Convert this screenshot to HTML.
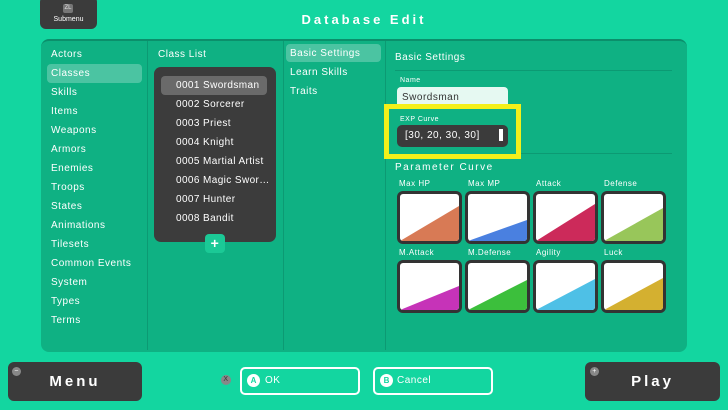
<!DOCTYPE html>
<html><head><meta charset="utf-8"><style>
*{margin:0;padding:0;box-sizing:border-box}
body{width:728px;height:410px;background:#13d6a0;font-family:"Liberation Sans",sans-serif;color:#fff;position:relative;overflow:hidden;letter-spacing:.5px}
.a{position:absolute}
.panel{left:41px;top:39px;width:646px;height:313px;background:#0fb183;border-radius:8px;border-top:2px solid #0b8f6b}
.vd{top:41px;width:1px;height:309px;background:#0c9a73}
.t{font-size:10px}
.menu div{position:absolute;left:51px;font-size:10px}
.sel{background:rgba(255,255,255,.25);border-radius:4px}
.list{left:154px;top:67px;width:122px;height:175px;background:#3c3c3c;border-radius:7px}
.list div{position:absolute;left:22px;font-size:10px;letter-spacing:.4px}
.box{position:absolute;width:65px;height:53px;background:#333;border-radius:6px;padding:3px}
.box svg{display:block;width:59px;height:47px;border-radius:3px;background:#fff}
.lab{position:absolute;font-size:8px}
.btn{position:absolute;background:#3b3b3b;border-radius:6px;font-weight:bold;font-size:15px;text-align:center;letter-spacing:3px}
.ob{position:absolute;border:2px solid #fff;border-radius:5px;height:28px;font-size:10px}
.circ{position:absolute;width:13px;height:13px;border-radius:50%;background:#fff;color:#13d6a0;font-size:8px;font-weight:bold;text-align:center;line-height:13px;letter-spacing:0}
</style></head><body>
<div class="a" style="left:40px;top:-4px;width:57px;height:33px;background:#3b3b3b;border-radius:6px"></div>
<div class="a" style="left:63px;top:4px;width:10px;height:9px;background:#777;border-radius:2px;font-size:6px;text-align:center;line-height:9px;color:#ddd;letter-spacing:0">ZL</div>
<div class="a" style="left:40px;top:16px;width:57px;text-align:center;font-size:7px;letter-spacing:0">Submenu</div>
<div class="a" style="left:0;top:12px;width:728px;text-align:center;font-size:13px;font-weight:bold;letter-spacing:3px">Database Edit</div>

<div class="a panel"></div>
<div class="a vd" style="left:147px"></div>
<div class="a vd" style="left:283px"></div>
<div class="a vd" style="left:385px"></div>

<div class="a sel" style="left:47px;top:64px;width:95px;height:19px"></div>
<div class="menu">
<div style="top:49px">Actors</div><div style="top:68px">Classes</div><div style="top:87px">Skills</div><div style="top:106px">Items</div><div style="top:125px">Weapons</div><div style="top:144px">Armors</div><div style="top:163px">Enemies</div><div style="top:182px">Troops</div><div style="top:201px">States</div><div style="top:220px">Animations</div><div style="top:239px">Tilesets</div><div style="top:258px">Common Events</div><div style="top:277px">System</div><div style="top:296px">Types</div><div style="top:315px">Terms</div>
</div>

<div class="a t" style="left:158px;top:49px">Class List</div>
<div class="a list">
<div class="sel" style="left:7px;top:9px;width:106px;height:19px;background:#6a6a6a"></div>
<div style="top:13px">0001 Swordsman</div><div style="top:32px">0002 Sorcerer</div><div style="top:51px">0003 Priest</div><div style="top:70px">0004 Knight</div><div style="top:89px">0005 Martial Artist</div><div style="top:108px">0006 Magic Swor…</div><div style="top:127px">0007 Hunter</div><div style="top:146px">0008 Bandit</div>
</div>
<div class="a" style="left:205px;top:234px;width:20px;height:19px;background:#1bc996;border-radius:4px;text-align:center;font-weight:bold;font-size:14px;line-height:19px">+</div>

<div class="a sel" style="left:286px;top:44px;width:95px;height:18px"></div>
<div class="a t" style="left:290px;top:48px">Basic Settings</div>
<div class="a t" style="left:290px;top:67px">Learn Skills</div>
<div class="a t" style="left:290px;top:86px">Traits</div>

<div class="a t" style="left:395px;top:52px">Basic Settings</div>
<div class="a" style="left:395px;top:70px;width:277px;height:1px;background:#0c9a73"></div>
<div class="a" style="left:400px;top:77px;font-size:7px">Name</div>
<div class="a" style="left:397px;top:87px;width:111px;height:20px;background:#e6f9f2;border-radius:4px 4px 0 0;color:#333;font-size:10px;padding:5px 0 0 5px">Swordsman</div>
<div class="a" style="left:384px;top:104px;width:137px;height:55px;border:5px solid #f4f01a"></div>
<div class="a" style="left:400px;top:116px;font-size:7px">EXP Curve</div>
<div class="a" style="left:397px;top:125px;width:111px;height:22px;background:#3b3b3b;border-radius:5px;font-size:10px;padding:5px 0 0 8px">[30, 20, 30, 30]</div>
<div class="a" style="left:499px;top:129px;width:4px;height:12px;background:#fff"></div>
<div class="a" style="left:521px;top:153px;width:151px;height:1px;background:#0c9a73"></div>
<div class="a t" style="left:395px;top:162px;letter-spacing:1.5px">Parameter Curve</div>

<div class="lab" style="left:399px;top:179px">Max HP</div>
<div class="lab" style="left:468px;top:179px">Max MP</div>
<div class="lab" style="left:536px;top:179px">Attack</div>
<div class="lab" style="left:604px;top:179px">Defense</div>
<div class="box" style="left:397px;top:191px"><svg viewBox="0 0 59 47"><polygon points="0,47 59,12 59,47" fill="#d87a55"/></svg></div>
<div class="box" style="left:465px;top:191px"><svg viewBox="0 0 59 47"><polygon points="0,47 59,26 59,47" fill="#4a80e0"/></svg></div>
<div class="box" style="left:533px;top:191px"><svg viewBox="0 0 59 47"><polygon points="0,47 59,10 59,47" fill="#cc2a5a"/></svg></div>
<div class="box" style="left:601px;top:191px"><svg viewBox="0 0 59 47"><polygon points="0,47 59,14 59,47" fill="#98c65a"/></svg></div>

<div class="lab" style="left:399px;top:248px">M.Attack</div>
<div class="lab" style="left:468px;top:248px">M.Defense</div>
<div class="lab" style="left:536px;top:248px">Agility</div>
<div class="lab" style="left:604px;top:248px">Luck</div>
<div class="box" style="left:397px;top:260px"><svg viewBox="0 0 59 47"><polygon points="0,47 59,23 59,47" fill="#c633b8"/></svg></div>
<div class="box" style="left:465px;top:260px"><svg viewBox="0 0 59 47"><polygon points="0,47 59,17 59,47" fill="#3cbf3c"/></svg></div>
<div class="box" style="left:533px;top:260px"><svg viewBox="0 0 59 47"><polygon points="0,47 59,16 59,47" fill="#4ec0e6"/></svg></div>
<div class="box" style="left:601px;top:260px"><svg viewBox="0 0 59 47"><polygon points="0,47 59,15 59,47" fill="#d4b030"/></svg></div>

<div class="btn" style="left:8px;top:362px;width:134px;height:39px;line-height:39px">Menu</div>
<div class="a" style="left:12px;top:367px;width:9px;height:9px;border-radius:50%;background:#888;font-size:7px;text-align:center;line-height:9px">−</div>
<div class="btn" style="left:585px;top:362px;width:135px;height:39px;line-height:39px">Play</div>
<div class="a" style="left:590px;top:367px;width:9px;height:9px;border-radius:50%;background:#888;font-size:7px;text-align:center;line-height:9px">+</div>
<div class="a" style="left:221px;top:375px;width:10px;height:10px;border-radius:50%;background:#888;font-size:7px;text-align:center;line-height:10px;color:#333">X</div>
<div class="ob" style="left:240px;top:367px;width:120px"></div>
<div class="circ" style="left:247px;top:374px">A</div>
<div class="a" style="left:265px;top:375px;font-size:10px">OK</div>
<div class="ob" style="left:373px;top:367px;width:120px"></div>
<div class="circ" style="left:380px;top:374px">B</div>
<div class="a" style="left:397px;top:375px;font-size:10px">Cancel</div>
</body></html>
